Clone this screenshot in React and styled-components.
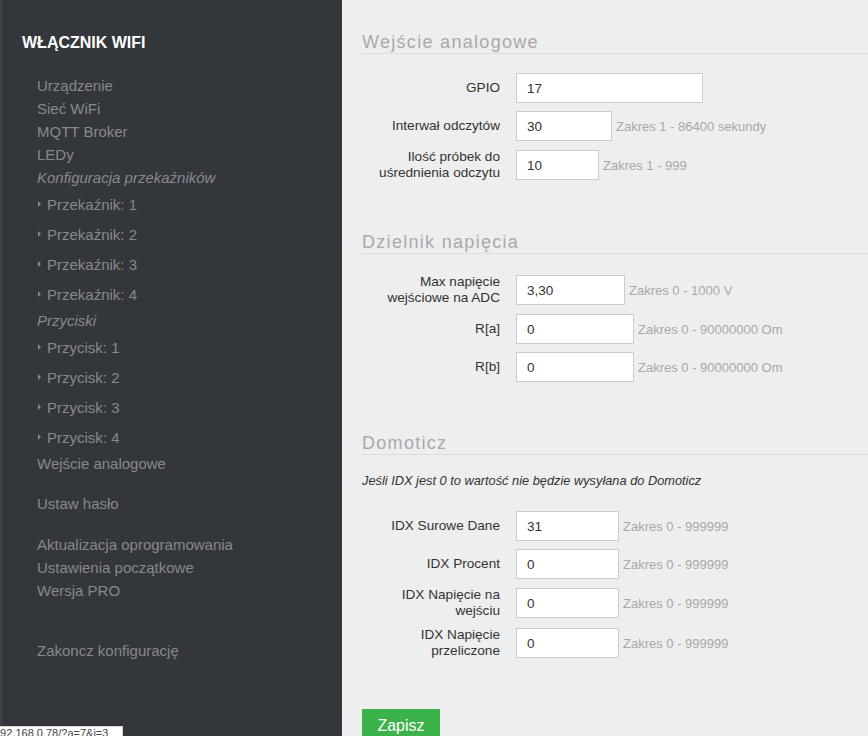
import React from "react";
import styled, { createGlobalStyle } from "styled-components";

const Global = createGlobalStyle`
  html, body { margin: 0; padding: 0; }
  body {
    font-family: "Liberation Sans", Arial, sans-serif;
    background: #eeeeee;
    overflow: hidden;
  }
  * { box-sizing: border-box; }
`;

const Page = styled.div`
  display: flex;
  height: 736px;
  width: 868px;
  position: relative;
  overflow: hidden;
`;

const Sidebar = styled.nav`
  width: 342px;
  flex: none;
  background: #33363b;
  border-left: 2px solid #3f4248;
  padding: 33px 0 0 20px;
`;

const Brand = styled.div`
  color: #ffffff;
  font-weight: bold;
  font-size: 16px;
  line-height: 20px;
  margin-bottom: 21px;
`;

const Menu = styled.ul`
  list-style: none;
  margin: 0;
  padding: 0 0 0 15px;
`;

const Item = styled.li`
  color: #87898d;
  font-size: 15px;
  line-height: 23px;
  font-style: ${(p) => (p.$italic ? "italic" : "normal")};
  margin-top: ${(p) => p.$gap || 0}px;
`;

const SubItem = styled.li`
  color: #87898d;
  font-size: 15px;
  height: 30px;
  display: flex;
  align-items: center;
  padding-left: 1px;
  &::before {
    content: "";
    width: 0;
    height: 0;
    border-left: 3px solid #87898d;
    border-top: 3px solid transparent;
    border-bottom: 3px solid transparent;
    margin-right: 6px;
  }
`;

const Main = styled.main`
  flex: 1;
  padding: 31px 0 0 20px;
  min-width: 0;
`;

const Section = styled.section`
  margin-bottom: ${(p) => p.$mb ?? 50}px;
`;

const Heading = styled.h2`
  margin: 0;
  font-size: 18px;
  line-height: 22px;
  font-weight: normal;
  letter-spacing: 1.3px;
  color: #a9a9a9;
  border-bottom: 1px solid #dcdcdc;
`;

const Note = styled.p`
  margin: 18px 0 0;
  font-size: 12.8px;
  line-height: 16px;
  font-style: italic;
  color: #333;
`;

const Rows = styled.div`
  display: flex;
  flex-direction: column;
  gap: 8px;
  margin-top: ${(p) => p.$mt ?? 19}px;
`;

const Row = styled.div`
  display: flex;
  align-items: center;
`;

const Label = styled.label`
  width: 138px;
  flex: none;
  text-align: right;
  font-size: 13.6px;
  line-height: 16px;
  color: #333;
  margin-right: 16px;
`;

const Input = styled.input`
  height: 30px;
  border: 1px solid #cccccc;
  background: #fff;
  padding: 0 10px;
  font-family: "Liberation Sans", Arial, sans-serif;
  font-size: 13.5px;
  color: #333;
  outline: none;
  flex: none;
`;

const Hint = styled.span`
  margin-left: 4px;
  font-size: 13px;
  color: #a8a8a8;
  white-space: nowrap;
`;

const SaveButton = styled.button`
  background: #3cb34a;
  color: #fff;
  border: none;
  font-family: "Liberation Sans", Arial, sans-serif;
  font-size: 16px;
  line-height: 18px;
  padding: 8px 15px 12px;
  width: 78px;
`;

const StatusBar = styled.div`
  position: absolute;
  left: 0;
  bottom: 0;
  width: 123px;
  height: 10px;
  background: #fff;
  border-top: 1px solid #d8d8d8;
  border-right: 1px solid #d8d8d8;
  overflow: hidden;
  font-size: 11px;
  line-height: 12px;
  color: #444;
  white-space: nowrap;
  text-indent: -6px;
`;

const Field = ({ label, value, width, hint }) => (
  <Row>
    <Label>{label}</Label>
    <Input defaultValue={value} style={{ width }} />
    {hint && <Hint>{hint}</Hint>}
  </Row>
);

export default function App() {
  return (
    <>
      <Global />
      <Page>
        <Sidebar>
          <Brand>WŁĄCZNIK WIFI</Brand>
          <Menu>
            <Item>Urządzenie</Item>
            <Item>Sieć WiFi</Item>
            <Item>MQTT Broker</Item>
            <Item>LEDy</Item>
            <Item $italic>Konfiguracja przekaźników</Item>
            <SubItem>Przekaźnik: 1</SubItem>
            <SubItem>Przekaźnik: 2</SubItem>
            <SubItem>Przekaźnik: 3</SubItem>
            <SubItem>Przekaźnik: 4</SubItem>
            <Item $italic>Przyciski</Item>
            <SubItem>Przycisk: 1</SubItem>
            <SubItem>Przycisk: 2</SubItem>
            <SubItem>Przycisk: 3</SubItem>
            <SubItem>Przycisk: 4</SubItem>
            <Item>Wejście analogowe</Item>
            <Item $gap={17}>Ustaw hasło</Item>
            <Item $gap={18}>Aktualizacja oprogramowania</Item>
            <Item>Ustawienia początkowe</Item>
            <Item>Wersja PRO</Item>
            <Item $gap={37}>Zakoncz konfigurację</Item>
          </Menu>
        </Sidebar>
        <Main>
          <Section>
            <Heading>Wejście analogowe</Heading>
            <Rows>
              <Field label="GPIO" value="17" width={187} />
              <Field label="Interwał odczytów" value="30" width={96} hint="Zakres 1 - 86400 sekundy" />
              <Field label="Ilość próbek do uśrednienia odczytu" value="10" width={83} hint="Zakres 1 - 999" />
            </Rows>
          </Section>
          <Section>
            <Heading>Dzielnik napięcia</Heading>
            <Rows $mt={20}>
              <Field label="Max napięcie wejściowe na ADC" value="3,30" width={109} hint="Zakres 0 - 1000 V" />
              <Field label="R[a]" value="0" width={118} hint="Zakres 0 - 90000000 Om" />
              <Field label="R[b]" value="0" width={118} hint="Zakres 0 - 90000000 Om" />
            </Rows>
          </Section>
          <Section $mb={50}>
            <Heading>Domoticz</Heading>
            <Note>Jeśli IDX jest 0 to wartość nie będzie wysyłana do Domoticz</Note>
            <Rows $mt={22}>
              <Field label="IDX Surowe Dane" value="31" width={103} hint="Zakres 0 - 999999" />
              <Field label="IDX Procent" value="0" width={103} hint="Zakres 0 - 999999" />
              <Field label="IDX Napięcie na wejściu" value="0" width={103} hint="Zakres 0 - 999999" />
              <Field label="IDX Napięcie przeliczone" value="0" width={103} hint="Zakres 0 - 999999" />
            </Rows>
          </Section>
          <SaveButton>Zapisz</SaveButton>
        </Main>
        <StatusBar>192.168.0.78/?a=7&amp;i=3</StatusBar>
      </Page>
    </>
  );
}
